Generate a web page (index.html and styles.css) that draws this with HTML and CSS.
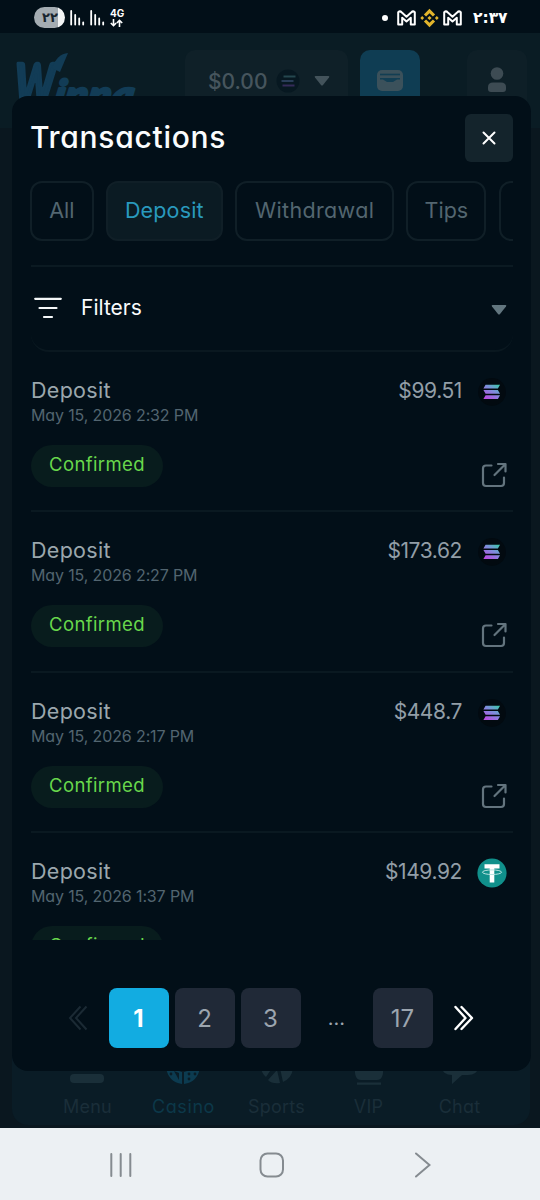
FILE: index.html
```html
<!DOCTYPE html>
<html lang="en">
<head>
<meta charset="utf-8">
<title>Transactions</title>
<link rel="stylesheet" href="styles.css">
</head>
<body>
<svg class="defs" width="0" height="0" aria-hidden="true">
  <defs>
    <linearGradient id="sol" x1="1" y1="0" x2="0.2" y2="1">
      <stop offset="0" stop-color="#35cfa5"/><stop offset=".45" stop-color="#7d8fdc"/><stop offset="1" stop-color="#b84be0"/>
    </linearGradient>
    <symbol id="i-sol" viewBox="0 0 28 28">
      <circle cx="14" cy="14" r="13" fill="#020a10"/>
      <path fill="url(#sol)" d="M8 7.200h13.500l-2 3.600H6zM6 12.100h13.500l2 3.600H8zM8 17h13.500l-2 3.600H6z"/>
    </symbol>
    <symbol id="i-usdt" viewBox="0 0 30 30">
      <circle cx="15" cy="15" r="14.600" fill="#10908b"/>
      <path fill="#fff" d="M7.500 6.200h15v4.200h-5.200v14.200h-4.600V10.400H7.500z"/>
      <ellipse cx="15" cy="14.200" rx="9.600" ry="2.300" fill="none" stroke="#b9e3e1" stroke-width="1"/>
    </symbol>
    <symbol id="i-open" viewBox="0 0 26 26">
      <path fill="none" stroke="#63747e" stroke-width="2.200" stroke-linecap="round" stroke-linejoin="round" d="M10.500 3.500H5a3 3 0 0 0-3 3V21a3 3 0 0 0 3 3h15a3 3 0 0 0 3-3v-5.500M17 2h7.500v7.500M24 2.500L13.500 13"/>
    </symbol>
  </defs>
</svg>

<header class="status">
  <div class="status-left">
    <span class="battery">٢٢</span>
    <svg width="15" height="18" viewBox="0 0 15 18"><path class="bars" d="M1.200 2v13.500M5.200 6v9.500M9.200 9.500v6M13.200 13.300v2.200"/></svg>
    <svg width="15" height="18" viewBox="0 0 15 18"><path class="bars" d="M1.200 2v13.500M5.200 6v9.500M9.200 9.500v6M13.200 13.300v2.200"/></svg>
    <span class="net"><b>4G</b>
      <svg width="13" height="8" viewBox="0 0 13 8"><path fill="none" stroke="#fff" stroke-width="1.600" d="M3.500 0v6.500M.8 4l2.700 2.700L6.200 4M9.500 8V1.300M6.800 4l2.700-2.700L12.200 4"/></svg>
    </span>
  </div>
  <div class="status-right">
    <i class="dot"></i>
    <svg width="19" height="16" viewBox="0 0 19 16"><path class="mail" d="M1.200 14.500V2.200Q3 .6 4.600 2.200L9.500 6.800l4.900-4.600q1.600-1.600 3.400 0v12.300h-4V7.700l-4.300 3.700-4.300-3.700v6.800z"/></svg>
    <svg width="19" height="20" viewBox="0 0 19 20"><g fill="#e2b52c"><path d="M9.500 .8l5.600 5.600-2.200 2.200-3.400-3.400-3.400 3.400-2.200-2.200zM9.500 19.200l5.600-5.600-2.200-2.200-3.400 3.400-3.400-3.400-2.200 2.200zM9.500 7.900l2.100 2.100-2.100 2.100L7.400 10zM2.200 8.100L4.100 10l-1.900 1.900L.3 10zM16.800 8.100l1.900 1.900-1.900 1.900-1.900-1.900z"/></g></svg>
    <svg width="19" height="16" viewBox="0 0 19 16"><path class="mail" d="M1.200 14.500V2.200Q3 .6 4.600 2.200L9.500 6.800l4.900-4.600q1.600-1.600 3.400 0v12.300h-4V7.700l-4.300 3.700-4.300-3.700v6.800z"/></svg>
    <span class="clock">٢:٣٧</span>
  </div>
</header>

<main class="app">
  <div class="topbar">
    <svg class="logo" width="130" height="60" viewBox="0 0 130 60">
      <g fill="#123c56" stroke="#123c56" stroke-linejoin="round">
        <text class="logo-text" stroke-width="3.500" font-size="60" transform="translate(0 57) skewX(-2) scale(.68 1)">W</text>
        <text class="logo-text" stroke-width="2.500" font-size="42" textLength="90" lengthAdjust="spacingAndGlyphs" transform="translate(38 60) skewX(-10)">inna.</text>
        <path stroke="none" d="M38 18Q43 4 54 3L46 22z"/>
      </g>
    </svg>
    <div class="balance">
      <span>$0.00</span>
      <svg width="24" height="24" viewBox="0 0 24 24"><circle cx="12" cy="12" r="11.500" fill="#071821"/><path fill="none" stroke-width="2" stroke="#25474f" d="M7.500 7.500h12"/><path fill="none" stroke-width="2" stroke="#293d58" d="M5.500 12h12"/><path fill="none" stroke-width="2" stroke="#352b59" d="M6.500 16.500h12"/></svg>
      <svg width="16" height="10" viewBox="0 0 16 10"><path fill="#43535b" d="M1.500 0h13q1.500 .2.500 1.500L9 9q-1 1-2 0L1 1.500Q0 .2 1.500 0z"/></svg>
    </div>
    <div class="wallet">
      <svg width="26" height="21" viewBox="0 0 26 21"><rect width="26" height="21" rx="5" fill="#3b515b"/><path d="M3 4.500h20" fill="none" stroke="#123e53" stroke-width="1.600"/><path d="M3 8h20v1.500h-3L16 12h-6L6 9.500H3z" fill="#123e53"/></svg>
    </div>
    <div class="user">
      <svg width="18" height="26" viewBox="0 0 18 26"><circle cx="9" cy="6.500" r="6.300" fill="#3d4b53"/><path fill="#3d4b53" d="M0 22v-2q0-4.500 5-4.500h8q5 0 5 4.500v2q0 3-3 3H3q-3 0-3-3z"/></svg>
    </div>
  </div>
  <nav class="tabs">
    <a><svg width="36" height="26" viewBox="0 0 36 26"><path fill="#142b36" d="M3 0h30v10H3z"/><rect x="1" y="13" width="34" height="9" rx="4" fill="#1a2f39"/></svg>Menu</a>
    <a class="on"><svg width="36" height="26" viewBox="0 0 36 26"><path fill="#0c3b50" d="M1 6l16 5v12Q3 21 1 6zM35 6l-16 5v12Q33 21 35 6z"/><g fill="#0a1c26"><circle cx="6" cy="13" r="1.400"/><path d="M9 10l5 9v-7z"/><circle cx="24" cy="18" r="1.400"/><circle cx="30" cy="13" r="1.400"/><circle cx="24" cy="13" r="1.400"/></g></svg>Casino</a>
    <a class="sports"><svg width="36" height="26" viewBox="0 0 36 26"><path fill="#1a2f39" d="M2 7h11l-6 9Q3 13 2 7zM18 9l3 13q-8 1-12-3zM21 7h13q-1 10-10 14z"/></svg>Sports</a>
    <a class="vip"><svg width="36" height="26" viewBox="0 0 36 26"><path fill="#1a2f39" d="M4 6h28q1 13-6 13H10Q3 19 4 6zM6 21.500h24v2.200H6z"/></svg>VIP</a>
    <a><svg width="36" height="26" viewBox="0 0 36 26"><path fill="#1a2f39" d="M0 7h36q-1 7-10 7h-6l-10 9v-9Q1 14 0 7z"/></svg>Chat</a>
  </nav>
</main>

<section class="modal">
  <div class="modal-head">
    <h1>Transactions</h1>
    <button class="close"><svg width="14" height="14" viewBox="0 0 14 14"><path fill="none" stroke="#fff" stroke-width="2" stroke-linecap="round" d="M1.500 1.500l11 11M12.500 1.500l-11 11"/></svg></button>
  </div>
  <div class="chips">
    <span class="chip all">All</span><span class="chip dep">Deposit</span><span class="chip wd">Withdrawal</span><span class="chip tips">Tips</span><span class="chip more"></span>
  </div>
  <div class="filters">
    <svg width="28" height="22" viewBox="0 0 28 22"><path fill="none" stroke="#f4f7f8" stroke-width="2.200" stroke-linecap="round" d="M1.200 1.800h25.600M5.500 11h17M10 20h8"/></svg>
    <span>Filters</span>
    <svg class="caret" width="16" height="10" viewBox="0 0 16 10"><path fill="#62767f" d="M1.500 0h13q1.500 .2.500 1.500L9 9q-1 1-2 0L1 1.500Q0 .2 1.500 0z"/></svg>
  </div>
  <div class="list">
    <article class="row">
      <div class="info"><h2>Deposit</h2><p>May 15, 2026 2:32 PM</p><span class="badge">Confirmed</span></div>
      <div class="side"><div class="amount"><span>$99.51</span><svg width="30" height="30"><use href="#i-sol"/></svg></div><svg class="open" width="26" height="26"><use href="#i-open"/></svg></div>
    </article>
    <article class="row">
      <div class="info"><h2>Deposit</h2><p>May 15, 2026 2:27 PM</p><span class="badge">Confirmed</span></div>
      <div class="side"><div class="amount"><span>$173.62</span><svg width="30" height="30"><use href="#i-sol"/></svg></div><svg class="open" width="26" height="26"><use href="#i-open"/></svg></div>
    </article>
    <article class="row">
      <div class="info"><h2>Deposit</h2><p>May 15, 2026 2:17 PM</p><span class="badge">Confirmed</span></div>
      <div class="side"><div class="amount"><span>$448.7</span><svg width="30" height="30"><use href="#i-sol"/></svg></div><svg class="open" width="26" height="26"><use href="#i-open"/></svg></div>
    </article>
    <article class="row">
      <div class="info"><h2>Deposit</h2><p>May 15, 2026 1:37 PM</p><span class="badge">Confirmed</span></div>
      <div class="side"><div class="amount"><span>$149.92</span><svg width="30" height="30"><use href="#i-usdt"/></svg></div><svg class="open" width="26" height="26"><use href="#i-open"/></svg></div>
    </article>
  </div>
  <div class="pager">
    <span class="arrow"><svg width="20" height="26" viewBox="0 0 20 26"><path fill="none" stroke="#1b2a34" stroke-width="2" d="M12.500 1.500L2 13l10.500 11.500M18.500 1.500L8 13l10.500 11.500"/></svg></span>
    <span class="page current">1</span><span class="page">2</span><span class="page">3</span><span class="page gap">...</span><span class="page">17</span>
    <span class="arrow next"><svg width="20" height="26" viewBox="0 0 20 26"><path fill="none" stroke="#fff" stroke-width="2.400" stroke-linecap="round" stroke-linejoin="round" d="M1.500 2l10 11-10 11M7.500 2l10.500 11L7.500 24"/></svg></span>
  </div>
</section>

<footer class="system">
  <svg width="22" height="24" viewBox="0 0 22 24"><path class="key" d="M1.300 1v22M10.700 1v22M20.300 1v22"/></svg>
  <svg class="home" width="26" height="26" viewBox="0 0 26 26"><rect class="key" x="1.500" y="1.500" width="22.500" height="23" rx="7"/></svg>
  <svg width="16" height="26" viewBox="0 0 16 26"><path class="key" d="M1 1.500L14.500 13 1 24.500"/></svg>
</footer>
</body>
</html>
```

FILE: styles.css
```css
* { box-sizing: border-box; margin: 0; }
body {
  position: relative;
  display: flex;
  flex-direction: column;
  width: 540px;
  height: 1200px;
  overflow: hidden;
  background: #06151d;
  font-family: Inter, "Open Sans", sans-serif;
  font-feature-settings: "cv11";
  -webkit-font-smoothing: antialiased;
}
svg { display: block; flex: none; }
.defs { position: absolute; }

.status {
  display: flex;
  justify-content: space-between;
  height: 33px;
  padding: 2px 33px 0 34px;
  background: #020f18;
  color: #fff;
}
.status-left, .status-right { display: flex; align-items: center; }
.status-left { gap: 5px; }
.battery {
  width: 31px;
  height: 21px;
  padding-left: 8px;
  border-radius: 11px;
  background: linear-gradient(90deg, #a4acb2 24px, #f2f4f5 24px);
  color: #18242d;
  font: bold 13px/22px "DejaVu Sans", sans-serif;
}
.bars { fill: none; stroke: #fff; stroke-width: 1.8; stroke-linecap: round; }
.net { display: flex; flex-direction: column; gap: 1px; width: 15px; }
.net b { font-size: 10px; line-height: 9px; }
.status-right { gap: 4px; }
.dot { width: 6px; height: 6px; margin-right: 5px; border-radius: 50%; background: #fff; }
.mail { fill: none; stroke: #fff; stroke-width: 2; stroke-linejoin: round; }
.clock { width: 34px; margin-left: 7px; font: bold 15.5px/24px "DejaVu Sans", sans-serif; letter-spacing: -.4px; white-space: nowrap; }

.app { display: flex; flex-direction: column; justify-content: space-between; height: 1095px; padding-bottom: 3px; background: #0a171f; }
.topbar { display: flex; align-items: flex-start; height: 95px; padding: 17px 13px 0 14px; background: #0a1c24; }
.logo { overflow: visible; }
.logo-text { font-family: Lato, sans-serif; font-weight: 900; font-style: italic; }
.balance {
  display: flex;
  align-items: center;
  width: 163px;
  height: 62px;
  margin-left: 41px;
  padding-left: 23px;
  border-radius: 10px;
  background: #0f2028;
  color: #46555d;
  font-size: 21px;
  font-weight: 500;
}
.balance span { width: 68px; white-space: nowrap; }
.balance svg:last-child { margin-left: 14px; }
.wallet { display: flex; justify-content: center; width: 60px; height: 62px; margin-left: 12px; padding-top: 20px; border-radius: 10px; background: #0f3d53; }
.user { display: flex; justify-content: center; width: 60px; height: 62px; margin-left: 47px; padding-top: 17px; border-radius: 10px; background: #0e1f27; }
.tabs { display: flex; align-items: flex-end; width: 518px; height: 88px; margin-left: 12px; padding: 0 24px 7px 29px; border-radius: 16px; background: #0a1c26; }
.tabs a { display: flex; flex-direction: column; align-items: center; gap: 9px; width: 93.3px; color: #1a2e39; font-size: 18px; line-height: 22px; letter-spacing: .25px; }
.tabs .on { color: #0c3849; padding-left: 6px; letter-spacing: .6px; }
.tabs .sports { padding-left: 6px; }
.tabs .vip { padding-left: 4px; }

.modal {
  position: absolute;
  top: 96px;
  left: 12px;
  display: flex;
  flex-direction: column;
  width: 518.5px;
  height: 975px;
  padding: 18px 17.5px 0 18.5px;
  border-radius: 16px;
  background: #020f18;
}
.modal-head { display: flex; justify-content: space-between; height: 67px; }
h1 { margin-left: -.6px; color: #fafcfd; font-size: 30px; font-weight: 500; line-height: 47px; letter-spacing: .72px; }
.close { display: flex; align-items: center; justify-content: center; width: 48px; height: 48px; padding: 0; border: 0; border-radius: 6px; background: #14242c; }
.chips { display: flex; gap: 12.3px; width: 483px; margin-left: -.5px; overflow: hidden; }
.chip { flex: none; height: 60px; border: 2px solid #101f27; border-radius: 12px; color: #536670; font-size: 21.5px; line-height: 55px; text-align: center; }
.all { width: 63.5px; }
.dep { width: 117px; background: #0b1b23; color: #2999bd; letter-spacing: .15px; }
.wd { width: 159px; letter-spacing: .35px; }
.tips { width: 80px; }
.more { width: 90px; }
.filters {
  display: flex;
  align-items: center;
  height: 87px;
  margin-top: 24px;
  padding: 0 6px 2px 3.5px;
  border-top: 2px solid #0b1a22;
  border-bottom: 2px solid #0a1820;
  border-radius: 0 0 18px 18px;
  color: #fafcfd;
  font-size: 21px;
}
.filters span { margin-left: 19px; }
.caret { margin: 4px 0 0 auto; }
.list { height: 588px; overflow: hidden; }
.row { display: flex; justify-content: space-between; height: 160.3px; padding: 24px 6px 0 .5px; border-bottom: 2px solid #0a1921; }
h2 { color: #9ba7ad; font-size: 21.5px; font-weight: 400; line-height: 29px; letter-spacing: .3px; }
.row p { color: #526570; font-size: 16px; line-height: 20px; letter-spacing: -.13px; }
.badge { display: block; width: 132px; height: 42px; margin-top: 20px; border-radius: 21px; background: #081c1d; color: #68d84c; font-size: 18.5px; line-height: 39px; letter-spacing: .4px; text-align: center; }
.side { display: flex; flex-direction: column; align-items: flex-end; }
.amount { display: flex; align-items: center; gap: 15px; height: 30px; margin-top: 1px; color: #929ea7; font-size: 21px; letter-spacing: -.4px; }
.amount span { padding-bottom: 3px; }
.open { margin-top: 55px; }
.pager { display: flex; align-items: center; gap: 6px; height: 60px; margin: 48px 0 0 -1px; }
.arrow { display: flex; justify-content: flex-end; width: 58px; margin-right: 15px; }
.next { justify-content: flex-start; margin: 0 0 0 15px; }
.page { width: 60px; height: 60px; border-radius: 8px; background: #202937; color: #9ca5af; font-size: 24px; line-height: 61px; text-align: center; }
.current { background: #12ace1; color: #fff; font-weight: 700; }
.gap { background: none; font-size: 20px; }

.system { display: flex; align-items: center; height: 72px; padding: 2px 109px 0 110px; justify-content: space-between; background: #ecf0f3; }
.home { margin-right: 4px; }
.key { fill: none; stroke: #858b90; stroke-width: 2; stroke-linecap: round; }
```
